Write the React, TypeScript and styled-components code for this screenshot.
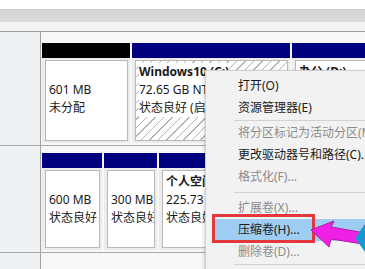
import React from "react";
import styled, { createGlobalStyle } from "styled-components";

const GlobalStyle = createGlobalStyle`
  body {
    margin: 0;
    background: #ffffff;
  }
`;

type Part = {
  width?: number;
  color: string;
  hatched?: boolean;
  lines: string[];
};

type Disk = {
  height: number;
  top: number;
  parts: Part[];
};

const disks: Disk[] = [
  {
    height: 113,
    top: 11,
    parts: [
      { width: 88, color: "#000000", lines: ["", "601 MB", "未分配"] },
      {
        width: 158,
        color: "#00007f",
        hatched: true,
        lines: ["Windows10 (C:)", "72.65 GB NTFS", "状态良好 (启动, 页面文件, 故障转储, 主分区)"],
      },
      { color: "#00007f", lines: ["办公 (D:)", "160.00 GB NTFS", "状态良好 (主分区)"] },
    ],
  },
  {
    height: 106,
    top: 7,
    parts: [
      { width: 60, color: "#00007f", lines: ["", "600 MB", "状态良好 (恢复分区)"] },
      { width: 53, color: "#00007f", lines: ["", "300 MB", "状态良好 (EFI 系统分区)"] },
      { color: "#00007f", lines: ["个人空间 (E:)", "225.73 GB NTFS", "状态良好 (主分区)"] },
    ],
  },
];

type MenuEntry = { label?: string; disabled?: boolean; active?: boolean; sep?: number };

const menu: MenuEntry[] = [
  { label: "打开(O)" },
  { label: "资源管理器(E)" },
  { sep: 3 },
  { label: "将分区标记为活动分区(M)", disabled: true },
  { label: "更改驱动器号和路径(C)..." },
  { label: "格式化(F)...", disabled: true },
  { sep: 9 },
  { label: "扩展卷(X)...", disabled: true },
  { label: "压缩卷(H)...", active: true },
  { label: "删除卷(D)...", disabled: true },
  { sep: 3 },
  { label: "属性(P)" },
];

const App = () => {
  return (
    <>
      <GlobalStyle />
      <Frame>
        <Toolbar>
          <Band />
        </Toolbar>
        {disks.map((disk, i) => (
          <DiskRow key={i} $height={disk.height}>
            <LabelCell />
            <Strip $top={disk.top}>
              {disk.parts.map((part, j) => (
                <Partition key={j} $width={part.width}>
                  <PartHeader $color={part.color} />
                  <PartBody>
                    <PartBox $hatched={part.hatched}>
                      {part.lines.map((line, k) => (
                        <Line key={k} $bold={k === 0} $hatched={part.hatched}>
                          {line || "\u00a0"}
                        </Line>
                      ))}
                    </PartBox>
                  </PartBody>
                </Partition>
              ))}
            </Strip>
          </DiskRow>
        ))}
        <DiskRow $height={16}>
          <LabelCell />
          <Strip $top={0} />
        </DiskRow>

        <Menu>
          {menu.map((entry, i) =>
            entry.sep ? (
              <Separator key={i} $space={entry.sep} />
            ) : (
              <MenuItem key={i} $disabled={entry.disabled} $active={entry.active}>
                {entry.label}
              </MenuItem>
            )
          )}
        </Menu>

        <Marker />
        <Pointer viewBox="0 0 65 45" width="65" height="45">
          <polygon
            points="11,18 34,9 31,15 65,21 63,32 31,27 29,35"
            fill="#f020e4"
            stroke="#b512a8"
            strokeWidth="1"
            strokeLinejoin="round"
          />
          <polygon points="55,26 65,12 75,26 65,40" fill="#1597d6" />
        </Pointer>
      </Frame>
    </>
  );
};

const Frame = styled.div`
  position: relative;
  width: 365px;
  height: 269px;
  overflow: hidden;
  background: #f6f6f6;
  font-family: "Noto Sans", "Noto Sans CJK SC", sans-serif;
  font-size: 12px;
  color: #1a1a1a;
`;

const Toolbar = styled.div`
  height: 31px;
  background: #f3f3f3;
  border-bottom: 1px solid #9a9a9a;
  display: flex;
  flex-direction: column;
  & > div {
    margin-top: 9px;
  }
  box-shadow: inset 0 9px 0 #ffffff;
`;

const Band = styled.div`
  height: 13px;
  background: linear-gradient(#d2d2d2, #dcdcdc);
`;

const DiskRow = styled.div<{ $height: number }>`
  display: flex;
  height: ${(p) => p.$height}px;
  border-bottom: 1px solid #a8a8a8;
`;

const LabelCell = styled.div`
  width: 40px;
  flex-shrink: 0;
  background: #eef1f4;
  border-right: 1px solid #a2a2a2;
`;

const Strip = styled.div<{ $top: number }>`
  flex: 1;
  display: flex;
  gap: 2px;
  padding: ${(p) => p.$top}px 0 2px 1px;
  overflow: hidden;
  background: #f7f7f7;
`;

const Partition = styled.div<{ $width?: number }>`
  display: flex;
  flex-direction: column;
  width: ${(p) => (p.$width ? `${p.$width}px` : "auto")};
  flex: ${(p) => (p.$width ? "none" : "1 0 120px")};
`;

const PartHeader = styled.div<{ $color: string }>`
  height: 15px;
  background: ${(p) => p.$color};
`;

const PartBody = styled.div`
  flex: 1;
  display: flex;
  padding: 2px 2px 2px 3px;
  background: #ececec;
`;

const PartBox = styled.div<{ $hatched?: boolean }>`
  flex: 1;
  min-width: 0;
  border: 1px solid #b8b8b8;
  padding: 2px 3px;
  overflow: hidden;
  background: ${(p) =>
    p.$hatched
      ? "repeating-linear-gradient(135deg, #ffffff 0 5px, #b4b4b4 5px 6px)"
      : "#ffffff"};
`;

const Line = styled.div<{ $bold?: boolean; $hatched?: boolean }>`
  line-height: 18px;
  white-space: nowrap;
  font-weight: ${(p) => (p.$bold ? 700 : 400)};
  width: fit-content;
  background: ${(p) => (p.$hatched ? "#ffffff" : "transparent")};
`;

const Menu = styled.div`
  position: absolute;
  left: 205px;
  top: 70px;
  width: 200px;
  padding-top: 4px;
  background: #f2f2f2;
  border: 1px solid #cfcfcf;
  box-shadow: -1px 1px 3px rgba(0, 0, 0, 0.18);
`;

const MenuItem = styled.div<{ $disabled?: boolean; $active?: boolean }>`
  height: 22px;
  line-height: 22px;
  margin: 0 0 0 9px;
  padding-left: 23px;
  white-space: nowrap;
  color: ${(p) => (p.$disabled ? "#8c8c8c" : "#1a1a1a")};
  background: ${(p) => (p.$active ? "#9fcdf1" : "transparent")};
`;

const Separator = styled.div<{ $space: number }>`
  height: 1px;
  margin: ${(p) => Math.floor((p.$space - 1) / 2)}px 0
    ${(p) => Math.ceil((p.$space - 1) / 2)}px 28px;
  background: #d2d2d2;
`;

const Marker = styled.div`
  position: absolute;
  left: 212px;
  top: 214px;
  width: 97px;
  height: 23px;
  border: 3px solid #e3373c;
`;

const Pointer = styled.svg`
  position: absolute;
  left: 300px;
  top: 212px;
`;

export default App;
